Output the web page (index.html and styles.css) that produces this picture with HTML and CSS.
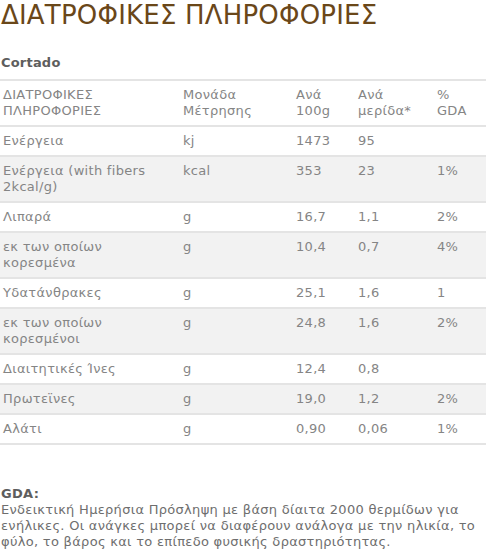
FILE: index.html
```html
<!DOCTYPE html>
<html lang="el">
<head>
<meta charset="utf-8">
<title>Διατροφικές Πληροφορίες</title>
<link rel="stylesheet" href="styles.css">
</head>
<body>
<h1 class="title">ΔΙΑΤΡΟΦΙΚΕΣ ΠΛΗΡΟΦΟΡΙΕΣ</h1>
<h2 class="product">Cortado</h2>
<table class="nutri">
  <colgroup>
    <col class="c1"><col class="c2"><col class="c3"><col class="c4"><col class="c5">
  </colgroup>
  <thead>
    <tr><th>ΔΙΑΤΡΟΦΙΚΕΣ<br>ΠΛΗΡΟΦΟΡΙΕΣ</th><th>Μονάδα<br>Μέτρησης</th><th>Ανά<br>100g</th><th>Ανά<br>μερίδα*</th><th>%<br>GDA</th></tr>
  </thead>
  <tbody>
    <tr><td>Ενέργεια</td><td>kj</td><td>1473</td><td>95</td><td></td></tr>
    <tr><td>Ενέργεια (with fibers<br>2kcal/g)</td><td>kcal</td><td>353</td><td>23</td><td>1%</td></tr>
    <tr><td>Λιπαρά</td><td>g</td><td>16,7</td><td>1,1</td><td>2%</td></tr>
    <tr><td>εκ των οποίων<br>κορεσμένα</td><td>g</td><td>10,4</td><td>0,7</td><td>4%</td></tr>
    <tr><td>Υδατάνθρακες</td><td>g</td><td>25,1</td><td>1,6</td><td>1</td></tr>
    <tr><td>εκ των οποίων<br>κορεσμένοι</td><td>g</td><td>24,8</td><td>1,6</td><td>2%</td></tr>
    <tr><td>Διαιτητικές Ίνες</td><td>g</td><td>12,4</td><td>0,8</td><td></td></tr>
    <tr><td>Πρωτεϊνες</td><td>g</td><td>19,0</td><td>1,2</td><td>2%</td></tr>
    <tr><td>Αλάτι</td><td>g</td><td>0,90</td><td>0,06</td><td>1%</td></tr>
  </tbody>
</table>
<div class="note">
  <strong class="note-title">GDA:</strong>
  <p class="note-text">Ενδεικτική Ημερήσια Πρόσληψη με βάση δίαιτα 2000 θερμίδων για<br>ενήλικες. Οι ανάγκες μπορεί να διαφέρουν ανάλογα με την ηλικία, το<br>φύλο, το βάρος και το επίπεδο φυσικής δραστηριότητας.</p>
</div>
</body>
</html>
```

FILE: styles.css
```css
html, body {
  margin: 0;
  padding: 0;
  background: #ffffff;
}
body {
  font-family: "DejaVu Sans", Verdana, sans-serif;
  font-size: 13px;
  line-height: 16px;
  letter-spacing: 0.3px;
  color: #858585;
}
.title {
  margin: 0;
  padding: 0 0 0 1px;
  font-size: 26px;
  line-height: 30px;
  font-weight: normal;
  letter-spacing: 0.2px;
  color: #6a4719;
}
.product {
  margin: 25px 0 0 0;
  padding: 0 0 0 1px;
  font-size: 13px;
  line-height: 16px;
  font-weight: bold;
  letter-spacing: 0.2px;
  color: #5e5e5e;
}
.nutri {
  margin-top: 8px;
  width: 486px;
  border-collapse: collapse;
  table-layout: fixed;
  border-top: 2px solid #e4e4e4;
}
.c1 { width: 180px; }
.c2 { width: 113px; }
.c3 { width: 62px; }
.c4 { width: 79px; }
.c5 { width: 52px; }
.nutri th,
.nutri td {
  text-align: left;
  vertical-align: top;
  font-weight: normal;
  padding: 6px 3px 6px 3px;
  border-bottom: 2px solid #e4e4e4;
  color: #858585;
  white-space: nowrap;
}
.nutri tbody tr:nth-child(even) {
  background: #f2f2f2;
}
.note {
  margin-top: 41px;
  padding-left: 1px;
}
.note-title {
  display: block;
  color: #5e5e5e;
}
.note-text {
  margin: 0;
  color: #6e6e6e;
  white-space: nowrap;
}
```
